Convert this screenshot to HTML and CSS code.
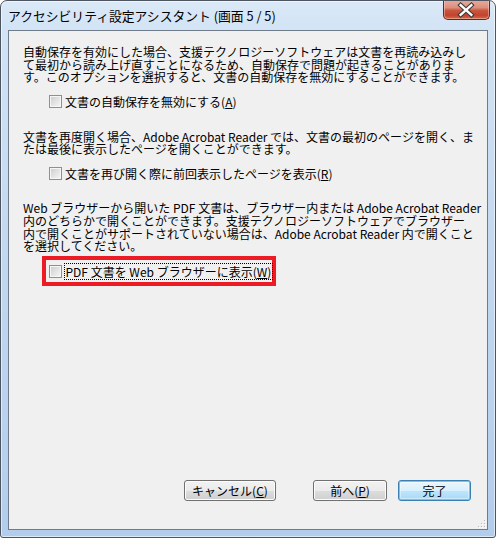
FILE: index.html
```html
<!DOCTYPE html>
<html lang="ja">
<head>
<meta charset="utf-8">
<title>アクセシビリティ設定アシスタント</title>
<link rel="stylesheet" href="styles.css">
</head>
<body>
<div class="window">
  <div class="titlebar">
    <span class="title">アクセシビリティ設定アシスタント (画面 5 / 5)</span>
    <div class="close">
      <svg width="47" height="20" viewBox="0 0 47 20">
        <path d="M18 5 L29 15 M29 5 L18 15" stroke="#3a3a3a" stroke-width="4.6" stroke-linecap="square"/>
        <path d="M18 5 L29 15 M29 5 L18 15" stroke="#ffffff" stroke-width="2.4" stroke-linecap="square"/>
      </svg>
    </div>
  </div>
  <div class="client">
    <p class="para p1">自動保存を有効にした場合、支援テクノロジーソフトウェアは文書を再読み込みし<br>て最初から読み上げ直すことになるため、自動保存で問題が起きることがありま<br>す。このオプションを選択すると、文書の自動保存を無効にすることができます。</p>
    <div class="check-row cr1"><span class="box"></span><span class="label">文書の自動保存を無効にする(<u>A</u>)</span></div>
    <p class="para p2">文書を再度開く場合、Adobe Acrobat Reader では、文書の最初のページを開く、ま<br>たは最後に表示したページを開くことができます。</p>
    <div class="check-row cr2"><span class="box"></span><span class="label">文書を再び開く際に前回表示したページを表示(<u>R</u>)</span></div>
    <p class="para p3">Web ブラウザーから開いた PDF 文書は、ブラウザー内または Adobe Acrobat Reader<br>内のどちらかで開くことができます。支援テクノロジーソフトウェアでブラウザー<br>内で開くことがサポートされていない場合は、Adobe Acrobat Reader 内で開くこと<br>を選択してください。</p>
    <div class="highlight">
      <div class="check-row cr3"><span class="box"></span><span class="label focus">PDF 文書を Web ブラウザーに表示(<u>W</u>)</span></div>
    </div>
    <div class="buttons">
      <button class="btn cancel">キャンセル(<u>C</u>)</button>
      <button class="btn prev">前へ(<u>P</u>)</button>
      <button class="btn ok">完了</button>
    </div>
    <svg class="grip" width="10" height="10" viewBox="0 0 10 10">
      <rect x="8" y="2" width="1" height="1" fill="#b8b8b8"/>
      <rect x="5" y="5" width="1" height="1" fill="#b8b8b8"/>
      <rect x="8" y="5" width="1" height="1" fill="#b8b8b8"/>
      <rect x="2" y="8" width="1" height="1" fill="#b8b8b8"/>
      <rect x="5" y="8" width="1" height="1" fill="#b8b8b8"/>
      <rect x="8" y="8" width="1" height="1" fill="#b8b8b8"/>
      <rect x="9" y="3" width="1" height="1" fill="#ffffff"/>
      <rect x="6" y="6" width="1" height="1" fill="#ffffff"/>
      <rect x="9" y="6" width="1" height="1" fill="#ffffff"/>
      <rect x="3" y="9" width="1" height="1" fill="#ffffff"/>
      <rect x="6" y="9" width="1" height="1" fill="#ffffff"/>
      <rect x="9" y="9" width="1" height="1" fill="#ffffff"/>
    </svg>
  </div>
</div>
</body>
</html>
```
FILE: styles.css
```css
* { box-sizing: border-box; }
html, body { margin: 0; padding: 0; background: #ffffff; }
body {
  font-family: "Noto Sans CJK JP", "Noto Sans", sans-serif;
  font-size: 12px;
  color: #000;
}
.window {
  width: 496px;
  height: 538px;
  border: 1px solid #4d5560;
  border-radius: 7px 7px 3px 3px;
  background: linear-gradient(to bottom, #dbe9f7 0px, #d1e3f5 30px, #c2d8f0 260px, #b2cdec 538px);
  box-shadow: inset 0 0 0 1px rgba(255,255,255,0.55);
  display: flex;
  flex-direction: column;
  padding: 0 7px 7px 7px;
  overflow: hidden;
}
.titlebar {
  height: 29px;
  display: flex;
  align-items: flex-start;
}
.title {
  flex: 1;
  font-size: 12.8px;
  line-height: 15px;
  margin-top: 7px;
  white-space: nowrap;
  color: #000;
}
.close {
  width: 47px;
  height: 20px;
  margin-top: -1px;
  margin-right: -2px;
  border: 1px solid #6a2418;
  border-top: none;
  border-radius: 0 0 5px 5px;
  background: linear-gradient(to bottom, #e8ab9c 0%, #dc8f7d 40%, #c8563f 55%, #c4432b 80%, #d06a4a 100%);
  box-shadow: inset 0 0 0 1px rgba(255,220,210,0.45);
  display: flex;
  align-items: center;
  justify-content: center;
  overflow: hidden;
}
.close svg { display: block; margin-left: -1px; }
.client {
  position: relative;
  flex: 1;
  background: #f0f0f0;
  border: 1px solid #6f7b88;
  padding: 15px 14px 28px 14px;
  display: flex;
  flex-direction: column;
}
.para {
  margin: 0;
  line-height: 12.6px;
  white-space: nowrap;
}
.p2 { margin-top: 22px; }
.p3 { margin-top: 21.5px; }
.check-row {
  display: flex;
  align-items: center;
  height: 14px;
  line-height: 14px;
  white-space: nowrap;
}
.cr1 { margin-top: 11px; padding-left: 26px; }
.cr2 { margin-top: 11px; padding-left: 26px; }
.box {
  width: 13px;
  height: 13px;
  border: 1px solid #8e8f8f;
  background: linear-gradient(135deg, #cbcbcb 0%, #e2e2e2 50%, #f8f8f8 100%);
  box-shadow: inset 0 0 0 1px #f6f6f6;
  flex: none;
  margin-right: 3px;
}
.label u { text-decoration: underline; text-underline-offset: 1px; }
.highlight {
  margin-top: 3.6px;
  margin-left: 19px;
  width: 234px;
  height: 30px;
  border: 4.5px solid #ed1c24;
  display: flex;
  align-items: center;
  padding-left: 2.5px;
}
.cr3 { height: 17px; }
.focus {
  outline: 1px dotted #000;
  outline-offset: 0;
  padding: 0 1px;
  line-height: 15px;
  margin-left: 0;
}
.buttons {
  margin-top: auto;
  display: flex;
  justify-content: flex-end;
  padding-right: 2px;
}
.btn {
  font-family: "Noto Sans CJK JP", "Noto Sans", sans-serif;
  font-size: 12px;
  color: #000;
  height: 21px;
  padding: 0;
  line-height: 18px;
  border: 1px solid #707070;
  border-radius: 3px;
  background: linear-gradient(to bottom, #f2f2f2 0%, #ebebeb 50%, #dddddd 51%, #cfcfcf 100%);
  box-shadow: inset 0 0 0 1px #fcfcfc;
  text-align: center;
}
.cancel { width: 92px; margin-right: 37px; }
.prev { width: 74px; margin-right: 11px; }
.ok {
  width: 73px;
  border-color: #3c7fb1;
  background: linear-gradient(to bottom, #eaf6fd 0%, #d9f0fc 50%, #bee6fd 51%, #a7d9f5 100%);
  box-shadow: inset 0 0 0 1px #48d7fd, inset 0 0 0 2px rgba(255,255,255,0.4);
}
.grip {
  position: absolute;
  right: 1px;
  bottom: 1px;
}
```
